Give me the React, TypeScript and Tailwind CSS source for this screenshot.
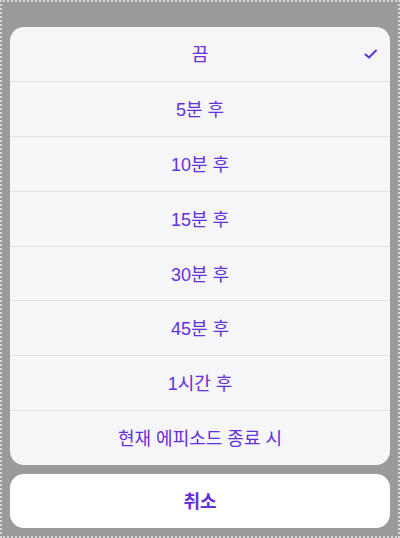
import React from "react";

const items = ["끔", "5분 후", "10분 후", "15분 후", "30분 후", "45분 후", "1시간 후", "현재 에피소드 종료 시"];

export default function App() {
  return (
    <div
      className="w-[400px] h-[538px] bg-[#9a9a9a] border-2 border-dotted border-[#d6d6d6] px-2 pt-[25px] pb-2 flex flex-col gap-[9px]"
      style={{ fontFamily: '"Liberation Sans", "Noto Sans CJK KR", sans-serif' }}
    >
      <div className="rounded-[14px] overflow-hidden bg-[#f6f5f8] flex flex-col">
        {items.map((t, i) => (
          <div
            key={t}
            className={`relative h-[54px] pt-[3px] flex items-center justify-center text-[18px] text-[#6331d9] ${i > 0 ? "border-t border-[#e2e1e6] h-[55px]" : ""}`}
          >
            <span>{t}</span>
            {i === 0 && (
              <svg className="absolute right-[12px] top-[21px]" width="14" height="12" viewBox="0 0 14 12" fill="none">
                <path d="M1.5 6.5 L5 9.5 L12 2.5" stroke="#6331d9" strokeWidth="2" strokeLinecap="round" strokeLinejoin="round" />
              </svg>
            )}
          </div>
        ))}
      </div>
      <div className="h-[54px] pt-[2px] rounded-[14px] bg-white flex items-center justify-center text-[18px] font-bold text-[#6331d9]">
        취소
      </div>
    </div>
  );
}
